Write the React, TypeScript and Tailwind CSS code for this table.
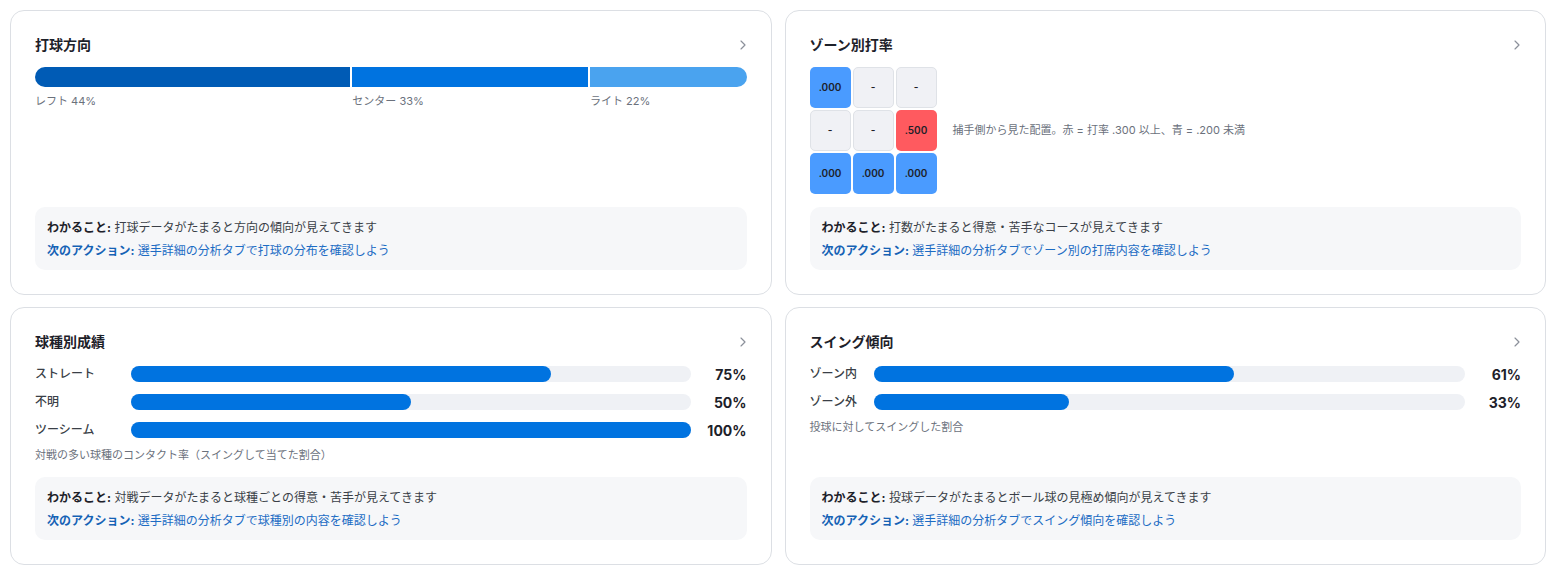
import { ChevronRight } from "lucide-react"

const font = { fontFamily: 'Inter, "Noto Sans CJK JP", sans-serif' }

const zones = [
  { v: ".000", c: "blue" },
  { v: "-", c: "none" },
  { v: "-", c: "none" },
  { v: "-", c: "none" },
  { v: "-", c: "none" },
  { v: ".500", c: "red" },
  { v: ".000", c: "blue" },
  { v: ".000", c: "blue" },
  { v: ".000", c: "blue" },
]

const pitches = [
  { label: "ストレート", pct: 75 },
  { label: "不明", pct: 50 },
  { label: "ツーシーム", pct: 100 },
]

const swings = [
  { label: "ゾーン内", pct: 61 },
  { label: "ゾーン外", pct: 33 },
]

function Insight({ know, action }: { know: string; action: string }) {
  return (
    <div className="mt-auto rounded-[10px] bg-[#f6f7f9] px-3 pt-[9px] pb-2 text-[12px] leading-[23px]">
      <p className="text-[#3a3f47]">
        <span className="font-bold text-[#1d2129]">わかること:</span> {know}
      </p>
      <p className="text-[#1c6cc4]">
        <span className="font-bold text-[#1562b5]">次のアクション:</span> {action}
      </p>
    </div>
  )
}

function Card({ title, children }: { title: string; children: React.ReactNode }) {
  return (
    <section className="flex flex-col rounded-[14px] border border-[#dcdfe4] bg-white px-6 pt-6 pb-6">
      <div className="flex items-center justify-between">
        <h2 className="text-[14px] font-semibold leading-5 text-[#1d2129]">{title}</h2>
        <ChevronRight className="-mr-1 h-4 w-4 text-[#8b909a]" strokeWidth={1.75} />
      </div>
      {children}
    </section>
  )
}

function BarRows({
  rows,
  labelW,
}: {
  rows: { label: string; pct: number }[]
  labelW: string
}) {
  return (
    <div className="mt-[14px] flex flex-col gap-3">
      {rows.map((r) => (
        <div key={r.label} className="flex h-4 items-center">
          <span className={`${labelW} shrink-0 text-[12px] font-medium text-[#3a3f47]`}>
            {r.label}
          </span>
          <div className="h-4 flex-1 rounded-full bg-[#eff1f5]">
            <div className="h-4 rounded-full bg-[#0073e0]" style={{ width: `${r.pct}%` }} />
          </div>
          <span className="w-14 shrink-0 text-right text-[14px] font-bold text-[#1d2129]">
            {r.pct}%
          </span>
        </div>
      ))}
    </div>
  )
}

export default function App() {
  return (
    <div className="bg-white pt-[10px] pr-[16px] pb-[10px] pl-[10px]" style={font}>
      <div className="grid grid-cols-2 gap-x-[13px] gap-y-[12px]">
        <Card title="打球方向">
          <div className="mt-[12px] flex h-5 gap-[2px] overflow-hidden rounded-full">
            <div className="w-[44.3%] bg-[#005bb5]" />
            <div className="w-[33.1%] bg-[#0073e0]" />
            <div className="flex-1 bg-[#4aa3ef]" />
          </div>
          <div className="mt-[6px] flex text-[11px] text-[#6b717c]">
            <span className="w-[44.6%]">レフト 44%</span>
            <span className="w-[33.4%]">センター 33%</span>
            <span>ライト 22%</span>
          </div>
          <div className="h-[13px]" />
          <Insight
            know="打球データがたまると方向の傾向が見えてきます"
            action="選手詳細の分析タブで打球の分布を確認しよう"
          />
        </Card>

        <Card title="ゾーン別打率">
          <div className="mt-[12px] flex items-center gap-4">
            <div className="grid grid-cols-[repeat(3,41px)] grid-rows-[repeat(3,41px)] gap-[2px]">
              {zones.map((z, i) => (
                <div
                  key={i}
                  className={
                    "flex items-center justify-center rounded-[5px] text-[10px] font-semibold text-[#1d2129] " +
                    (z.c === "blue"
                      ? "bg-[#4a9bff]"
                      : z.c === "red"
                        ? "bg-[#ff5a5f]"
                        : "border border-[#dfe2e7] bg-[#f0f1f5]")
                  }
                >
                  {z.v}
                </div>
              ))}
            </div>
            <p className="text-[11px] text-[#6b717c]">
              捕手側から見た配置。赤 = 打率 .300 以上、青 = .200 未満
            </p>
          </div>
          <div className="h-[13px]" />
          <Insight
            know="打数がたまると得意・苦手なコースが見えてきます"
            action="選手詳細の分析タブでゾーン別の打席内容を確認しよう"
          />
        </Card>

        <Card title="球種別成績">
          <BarRows rows={pitches} labelW="w-24" />
          <p className="mt-[9px] text-[11px] text-[#6b717c]">
            対戦の多い球種のコンタクト率（スイングして当てた割合）
          </p>
          <div className="h-[13px]" />
          <Insight
            know="対戦データがたまると球種ごとの得意・苦手が見えてきます"
            action="選手詳細の分析タブで球種別の内容を確認しよう"
          />
        </Card>

        <Card title="スイング傾向">
          <BarRows rows={swings} labelW="w-16" />
          <p className="mt-[9px] text-[11px] text-[#6b717c]">投球に対してスイングした割合</p>
          <div className="h-[13px]" />
          <Insight
            know="投球データがたまるとボール球の見極め傾向が見えてきます"
            action="選手詳細の分析タブでスイング傾向を確認しよう"
          />
        </Card>
      </div>
    </div>
  )
}
